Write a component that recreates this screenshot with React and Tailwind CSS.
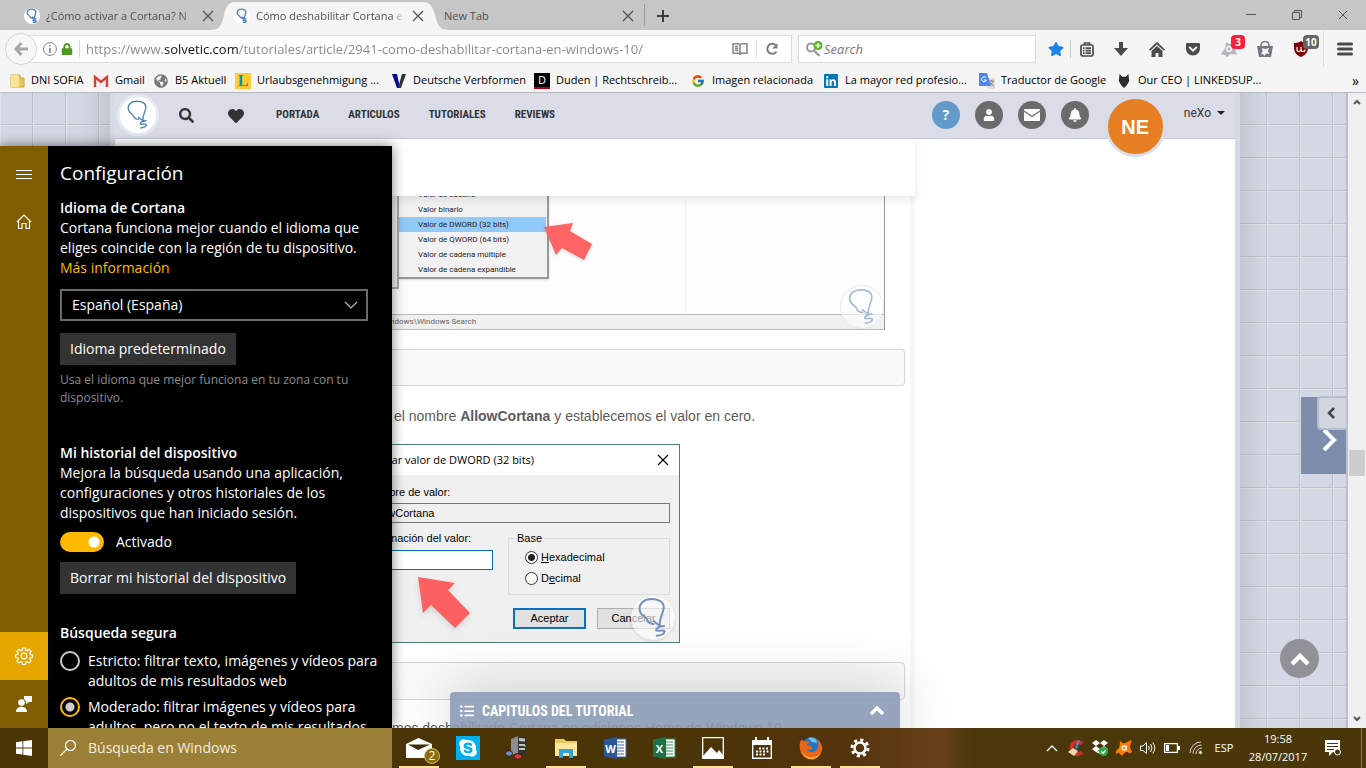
import { FaSearch, FaHeart, FaUser, FaBell, FaListUl, FaStar, FaLock, FaSkype, FaGlobeAmericas, FaLinkedin, FaGetPocket } from "react-icons/fa";
import { FcGoogle } from "react-icons/fc";

const UI = "font-['Open_Sans','Noto_Sans',sans-serif]";
const NARROW = "font-['Roboto_Condensed','Liberation_Sans_Narrow',Roboto,sans-serif]";

function Bulb({ className, stroke = "#4f81b5", width = 1.6 }) {
  return (
    <svg viewBox="0 0 36 36" className={className} fill="none" stroke={stroke} strokeWidth={width} strokeLinecap="round" strokeLinejoin="round" aria-hidden="true">
      <path d="M18.500 23C15 22.500 13.500 21.500 13 19C12 16.500 7.500 16.500 7 11C6.500 6 11 2.500 16.500 2.500C22.500 2.500 27 4.500 26.800 9.500C26.600 14 23 17.500 23.500 24.500L18.500 20.500M27 24.500C24.500 24.500 20.500 26 20.500 28C22.500 29.500 26.500 27 27.500 29C27.500 31 24 32.500 21 32.500" />
    </svg>
  );
}

function Cross({ className }) {
  return (
    <svg viewBox="0 0 12 12" className={className} stroke="currentColor" strokeWidth="1.2" aria-hidden="true">
      <path d="M1 1l10 10M11 1L1 11" />
    </svg>
  );
}

function TabIcon() {
  return (
    <span className="flex size-4 shrink-0 items-center justify-center rounded-full bg-white">
      <Bulb className="size-4" width={3} />
    </span>
  );
}

function TabBar() {
  const title = "relative w-[150px] overflow-hidden whitespace-nowrap [mask-image:linear-gradient(90deg,#000_90%,transparent)]";
  return (
    <div className="flex h-[30px] shrink-0 items-stretch bg-[#c6c6c6] text-[11px] text-[#4f4f4f]">
      <div className="flex w-[223px] items-center gap-1.5 pl-6 pt-0.5">
        <TabIcon />
        <span className={title}>¿Cómo activar a Cortana? N</span>
        <button aria-label="Cerrar pestaña"><Cross className="size-3" /></button>
      </div>
      <div className="relative flex w-[214px] items-center gap-1.5 pl-[11px] pt-0.5">
        <svg viewBox="0 0 238 28" preserveAspectRatio="none" className="absolute -left-3 top-0.5 h-7 w-[238px]" fill="#f5f5f5" aria-hidden="true">
          <path d="M0 28C7 28 10 25 12 17C14 7 16 0 24 0H212C220 0 223 7 225 17C227 25 231 28 238 28Z" />
        </svg>
        <span className="relative"><TabIcon /></span>
        <span className={title}>Cómo deshabilitar Cortana e</span>
        <button aria-label="Cerrar pestaña" className="relative"><Cross className="size-3" /></button>
      </div>
      <div className="flex w-[207px] items-center justify-between pl-[7px] pr-2.5 pt-0.5">
        <span>New Tab</span>
        <button aria-label="Cerrar pestaña"><Cross className="size-3" /></button>
      </div>
      <button aria-label="Nueva pestaña" className="my-1 border-l border-[#9c9c9c] px-3 pt-0.5">
        <svg viewBox="0 0 12 12" className="size-3" stroke="#3c3c3c" strokeWidth="2"><path d="M6 0v12M0 6h12" /></svg>
      </button>
      <div className="ml-auto flex items-center text-[#555]">
        <button aria-label="Minimizar" className="flex w-[46px] justify-center">
          <svg viewBox="0 0 10 10" className="size-2.5" stroke="currentColor"><path d="M0 4.500h10" /></svg>
        </button>
        <button aria-label="Restaurar" className="flex w-[46px] justify-center">
          <svg viewBox="0 0 10 10" className="size-2.5" fill="none" stroke="currentColor"><path d="M.5 2.500h7v7h-7zM2.500 2.500v-2h7v7h-2" /></svg>
        </button>
        <button aria-label="Cerrar" className="flex w-[46px] justify-center"><Cross className="size-2.5" /></button>
      </div>
    </div>
  );
}

function NavBar() {
  const slot = "relative flex h-7 w-9 items-center justify-center";
  return (
    <div className="flex h-[38px] shrink-0 items-center bg-[#f5f5f5] pl-[5px] text-[#4a4a4a]">
      <button aria-label="Atrás" className="z-10 flex size-8 shrink-0 items-center justify-center rounded-full border border-[#d4d4d4] bg-[#f7f7f7]">
        <svg viewBox="0 0 16 16" className="size-4" fill="none" stroke="#a8a8a8" strokeWidth="3"><path d="M15 8H3M8.500 2L3 8l5.500 6" /></svg>
      </button>
      <div className="-ml-4 flex h-7 min-w-0 flex-1 items-center border border-[#dcdcdc] bg-white pl-[21px]">
        <svg viewBox="0 0 14 14" className="size-3.5 shrink-0" fill="none" stroke="#808080"><circle cx="7" cy="7" r="6.400" /><path d="M7 6v5M7 3v1.600" strokeWidth="1.600" /></svg>
        <FaLock className="ml-1 size-3 shrink-0 text-[#4a9a1e]" />
        <span className="ml-1.5 h-[18px] w-px shrink-0 bg-[#d8d8d8]" />
        <input
          aria-label="Dirección"
          defaultValue="https://www.solvetic.com/tutoriales/article/2941-como-deshabilitar-cortana-en-windows-10/"
          className="ml-1.5 mt-0.5 min-w-0 flex-1 bg-[linear-gradient(90deg,#858585_77px,#111_77px,#111_152px,#858585_152px)] bg-clip-text text-[13px] text-transparent outline-none"
        />
        <button aria-label="Vista de lectura">
          <svg viewBox="0 0 16 14" className="h-3.5 w-4" fill="none" stroke="#858585" strokeWidth="1.500"><path d="M8 3V12M1 1.700h5Q8 2 8 3Q8 2 10 1.700h5v9.500h-5Q8 11.500 8 13Q8 11.500 6 11.200H1zM3 4.500h3M3 6.500h3M3 8.500h3" /></svg>
        </button>
        <span className="mx-2 h-[18px] w-px bg-[#dcdcdc]" />
        <button aria-label="Recargar" className="mr-3">
          <svg viewBox="0 0 14 14" className="size-3.5" fill="none" stroke="#7d7d7d" strokeWidth="2"><path d="M11.500 9.500A5 5 0 1 1 10.500 3" /><path d="M12.500 1v5.500H7z" fill="#7d7d7d" stroke="none" /></svg>
        </button>
      </div>
      <label className="ml-1.5 flex h-7 w-[238px] items-center border border-[#dcdcdc] bg-white pl-1.5">
        <svg viewBox="0 0 18 16" className="h-4 w-[18px]" fill="none"><path d="M9.500 10l5 5" stroke="#999" strokeWidth="2.400" /><circle cx="6" cy="6.500" r="4" stroke="#999" strokeWidth="2" /><circle cx="13" cy="4.500" r="4.500" fill="#5cb622" /><path d="M13 2v5M10.500 4.500h5" stroke="#fff" strokeWidth="1.400" /></svg>
        <input aria-label="Buscar" placeholder="Search" className="ml-px mt-0.5 min-w-0 flex-1 bg-transparent text-[13px] italic outline-none placeholder:text-[#777]" />
      </label>
      <div className="flex items-center pl-1.5">
        <button aria-label="Marcador" className="flex h-7 w-7 items-center justify-center"><FaStar className="size-4 text-[#1a82e8]" /></button>
        <span className="h-[18px] w-px bg-[#c8c8c8]" />
        <button aria-label="Marcadores" className="flex h-7 w-8 items-center justify-center">
          <svg viewBox="0 0 14 15" className="h-[15px] w-3.5" fill="none" stroke="currentColor" strokeWidth="1.700"><rect x="1" y="3" width="12" height="11" rx="1.500" /><path d="M4.500 3V1h5v2M3 6.200h1.500M5.500 6.200H11M3 8.700h1.500M5.500 8.700H11M3 11.200h1.500M5.500 11.200H11" /></svg>
        </button>
        <button aria-label="Descargas" className={slot}>
          <svg viewBox="0 0 14 14" className="size-3.5" fill="currentColor"><path d="M5 0h4v6h5l-7 8-7-8h5z" /></svg>
        </button>
        <button aria-label="Inicio" className={slot}>
          <svg viewBox="0 0 16 15" className="h-[15px] w-4" fill="currentColor"><path d="M8 0l8 7.500-1.200 1.200L8 2.500 1.200 8.700 0 7.500zM8 4l5.500 5v6H9.500v-4h-3v4h-4V9z" /></svg>
        </button>
        <button aria-label="Pocket" className={slot}><FaGetPocket className="size-4" /></button>
        <button aria-label="Avast" className={slot}>
          <svg viewBox="0 0 16 16" className="size-4"><path d="M5 1q3 2 5 2l5-2q0 3-1 6 0 3 2 6-3 1-5 0-3 0-4 3-2 0-3-2-2-1-4 0 0-3 3-5 2-3 2-8z" fill="#b7b7c1" /><circle cx="8" cy="8" r="2.300" stroke="#fff" strokeWidth="1.300" fill="none" /></svg>
          <span className="absolute left-5 top-0 flex h-3.5 w-3.5 items-center justify-center rounded-sm bg-[#fb1f3c] text-[10px] font-bold leading-none text-white">3</span>
        </button>
        <button aria-label="Compras" className={slot}>
          <svg viewBox="0 0 16 16" className="size-4" fill="none"><path d="M0 5h16l-2 11H2z" fill="#777783" /><path d="M4 7V4a4 3.500 0 0 1 8 0v3" stroke="#777783" strokeWidth="1.600" /><path d="M5 7l3 1 4-1-1 3 1 3-3-.5L7.500 15 6 13l-2 .5 1.500-3z" fill="#f5f5f5" /></svg>
        </button>
        <button aria-label="uBlock" className={slot}>
          <svg viewBox="0 0 14 16" className="h-4 w-3.5"><path d="M7 0c2 1.500 4 2 7 2v4c0 5-2 8-7 10C2 14 0 11 0 6V2c3 0 5-.5 7-2z" fill="#800000" /><path d="M3 6v2.500a1.500 1.500 0 0 0 4 0V6v2.500a1.500 1.500 0 0 0 4 0" stroke="#fff" strokeWidth="1.200" fill="none" /></svg>
          <span className="absolute left-5 top-0 flex h-3.5 w-4 items-center justify-center rounded-sm bg-[#666] text-[10px] font-bold leading-none text-white">10</span>
        </button>
        <button aria-label="Menú" className="ml-1 flex h-9 w-[43px] items-center justify-center border-l border-[#ddd]">
          <svg viewBox="0 0 16 14" className="h-3.5 w-4" stroke="currentColor" strokeWidth="3" strokeLinecap="round"><path d="M1.500 2h13M1.500 7h13M1.500 12h13" /></svg>
        </button>
      </div>
    </div>
  );
}

const bookmarks = [
  { t: "DNI SOFIA", w: "w-[84px]", i: <svg viewBox="0 0 16 16" className="size-4"><path d="M2 2h9v3h4v9H2z" fill="#e8c95c" stroke="#c9a83c" /><path d="M2 2h8v12H2z" fill="#f7e594" /></svg> },
  { t: "Gmail", w: "w-[60px]", i: <svg viewBox="0 0 16 16" className="size-4"><path d="M1 3h14v11H1z" fill="#eee" /><path d="M2 14V4l6 5 6-5v10" fill="none" stroke="#d54137" strokeWidth="2.400" /></svg> },
  { t: "B5 Aktuell", w: "w-[82px]", i: <FaGlobeAmericas className="size-3.5 text-[#777]" /> },
  { t: "Urlaubsgenehmigung ...", w: "w-[156px]", i: <span className="flex size-4 items-center justify-center bg-[#ffcb32] font-['Liberation_Serif',serif] text-base font-bold leading-none text-[#1590a5]">L</span> },
  { t: "Deutsche Verbformen", w: "w-[143px]", i: <svg viewBox="0 0 16 16" className="size-4"><path d="M1 1h5l3 14H6z" fill="#000d90" /><path d="M11 1h4L10 15H7z" fill="#333" /></svg> },
  { t: "Duden | Rechtschreib...", w: "w-[156px]", i: <span className="flex size-4 items-center justify-center border-b-2 border-[#b00018] bg-black text-[11px] leading-none text-white">D</span> },
  { t: "Imagen relacionada", w: "w-[133px]", i: <FcGoogle className="size-3.5" /> },
  { t: "La mayor red profesio...", w: "w-[156px]", i: <FaLinkedin className="size-4 text-[#0677b5]" /> },
  { t: "Traductor de Google", w: "w-[137px]", i: <svg viewBox="0 0 16 16" className="size-4"><path d="M6 5h10v11H9z" fill="#dcdcdc" /><path d="M0 0h8l4 13H0z" fill="#4b86ec" /><path d="M7 4.500A2.500 2.500 0 1 0 7.500 7H5" fill="none" stroke="#fff" /><path d="M10 8h5M12.500 7v1M14 8q-1 4-4 5M11 9q1 3 4 4" fill="none" stroke="#888" /></svg> },
  { t: "Our CEO | LINKEDSUP...", w: "w-[150px]", i: <svg viewBox="0 0 16 16" className="size-3.5"><path d="M3 0l3 3h4l3-3 1 8-3 5-3 3-3-3-3-5z" fill="#2c2c2c" /></svg> },
];

function Bookmarks() {
  return (
    <nav className="flex h-[25px] shrink-0 items-center border-b border-[#b9bac0] bg-[#f5f5f5] pl-[9px] pt-px text-[11px] text-black">
      {bookmarks.map((b) => (
        <a key={b.t} href="#" className={`flex items-center gap-1.5 whitespace-nowrap ${b.w}`}>
          <span className="flex size-4 shrink-0 items-center justify-center">{b.i}</span>
          <span>{b.t}</span>
        </a>
      ))}
      <button aria-label="Más marcadores" className="ml-auto pr-[7px] text-sm leading-none">»</button>
    </nav>
  );
}

function SiteHeader() {
  const round = "flex size-7 items-center justify-center rounded-full bg-[#6b6b6b] text-white";
  return (
    <header className="relative z-20 flex h-[46px] shrink-0 items-start border-b border-[#c6c8d0] bg-[#dadde8] text-[#333]">
      <a href="#" aria-label="Solvetic" className="ml-0.5 mt-px flex size-[42px] items-center justify-center rounded-full bg-[#e6eaf3]">
        <span className="flex size-9 items-center justify-center rounded-full bg-white"><Bulb className="size-8" width={1.5} /></span>
      </a>
      <div className="flex h-[45px] items-center pl-5">
        <button aria-label="Buscar"><FaSearch className="size-[15px]" /></button>
        <button aria-label="Favoritos" className="ml-[34px]"><FaHeart className="size-4" /></button>
        <nav className={`ml-8 flex gap-[29px] text-[11px] font-bold ${NARROW}`}>
          <a href="#">PORTADA</a><a href="#">ARTICULOS</a><a href="#">TUTORIALES</a><a href="#">REVIEWS</a>
        </nav>
      </div>
      <div className="ml-auto flex items-start">
        <div className="mt-2 flex gap-[15px]">
          <button aria-label="Ayuda" className="flex size-7 items-center justify-center rounded-full bg-[#649acb] text-sm font-bold text-white">?</button>
          <button aria-label="Perfil" className={round}><FaUser className="size-3" /></button>
          <button aria-label="Mensajes" className={round}>
            <svg viewBox="0 0 16 12" className="h-3 w-4"><rect width="16" height="12" rx="1" fill="#fff" /><path d="M0 2l8 5.500L16 2" fill="none" stroke="#6b6b6b" strokeWidth="1.300" /></svg>
          </button>
          <button aria-label="Avisos" className={round}><FaBell className="size-3.5" /></button>
        </div>
        <span className="ml-4 mt-[3px] flex size-[61px] items-center justify-center rounded-full border-[3px] border-[#dadde8] bg-[#e67e22] font-['Liberation_Sans',sans-serif] text-xl font-bold text-white">NE</span>
        <button className="ml-[18px] mr-2.5 mt-3 flex items-center gap-1.5 font-['Roboto',sans-serif] text-xs">
          neXo
          <svg viewBox="0 0 8 4" className="h-1 w-2"><path d="M0 0h8L4 4z" fill="#222" /></svg>
        </button>
      </div>
    </header>
  );
}

function MenuShot() {
  const rows = ["Valor de cadena", "Valor binario", "Valor de DWORD (32 bits)", "Valor de QWORD (64 bits)", "Valor de cadena múltiple", "Valor de cadena expandible"];
  return (
    <figure className="relative ml-[30px] mr-[25px] flex h-[143px] flex-col border-r border-[#999] bg-[#fdfdfd] text-[8px] text-[#222] font-['Roboto',sans-serif]">
      <div className="flex flex-1">
        <div className="mb-[25px] w-[254px] border-b-2 border-r-2 border-[#aaa] bg-[#f2f2f2]" />
        <ul className="mb-[35px] w-[150px] border-b-2 border-r-2 border-[#999] bg-[#f2f2f2] pr-px shadow">
          {rows.map((r, i) => (
            <li key={r} className={`flex h-[15px] items-center whitespace-nowrap pl-[19px] ${i === 2 ? "bg-[#91c9f7]" : ""}`}>{r}</li>
          ))}
        </ul>
        <div className="ml-[136px] w-px bg-[#f4f4f4]" />
      </div>
      <figcaption className="h-4 border-y border-[#bbb] bg-[#f0f0f0] pl-[245px] leading-[14px] text-[#666]">ndows\Windows Search</figcaption>
      <svg viewBox="0 0 52 42" className="absolute left-[398px] top-[35px] h-[42px] w-[52px] drop-shadow" aria-hidden="true">
        <path d="M1 5L30 1 27 9 49 22 41 38 19 26 13 33z" fill="#ff6464" />
      </svg>
      <span className="absolute bottom-px right-0 flex size-11 items-center justify-center rounded-full border border-[#e4e9f0] bg-white/60">
        <Bulb className="size-10" stroke="#a9bdd6" />
      </span>
    </figure>
  );
}

function DwordDialog() {
  return (
    <div className="relative mx-auto w-[330px] border border-[#4f7f72] bg-[#f0f0f0] text-[11px] text-black font-['Liberation_Sans',sans-serif]">
      <div className={`flex h-[30px] items-center justify-between bg-white pl-[9px] pr-2.5 ${UI}`}>
        <span className="text-[11px] pl-3">Editar valor de DWORD (32 bits)</span>
        <button aria-label="Cerrar diálogo"><Cross className="size-3" /></button>
      </div>
      <div className="px-[9px] pb-[13px] pt-2.5">
        <label htmlFor="vname" className="block pl-1.5 leading-[14px]">Nombre de valor:</label>
        <input id="vname" readOnly defaultValue="AllowCortana" className="mt-1 h-5 w-full border border-[#777] bg-[#f0f0f0] px-2" />
        <div className="mt-2 flex justify-between">
          <div>
            <label htmlFor="vdata" className="block pl-1.5 leading-[14px]">Información del valor:</label>
            <input id="vdata" defaultValue="" className="mt-[5px] h-5 w-[133px] border border-[#0b6fb8] bg-white" />
          </div>
          <fieldset className="flex h-16 w-[162px] flex-col gap-1 border border-[#dcdcdc] pl-4 pt-1">
            <legend className="-ml-2.5 px-0.5 leading-[14px]">Base</legend>
            <label className="flex h-[17px] items-center gap-[3px]"><input type="radio" name="base" defaultChecked className="m-0 size-[13px] appearance-none rounded-full border border-[#333] bg-white bg-[radial-gradient(#222_3px,transparent_4px)]" /><span><u>H</u>exadecimal</span></label>
            <label className="flex h-[17px] items-center gap-[3px]"><input type="radio" name="base" className="m-0 size-[13px] appearance-none rounded-full border border-[#333] bg-white" /><span>D<u>e</u>cimal</span></label>
          </fieldset>
        </div>
        <div className="mt-[13px] flex justify-end gap-[11px]">
          <button className="h-[21px] w-[73px] border-2 border-[#0f70c0] bg-[#e1e1e1]">Aceptar</button>
          <button className="h-[21px] w-[73px] border border-[#adadad] bg-[#e1e1e1]">Cancelar</button>
        </div>
      </div>
      <span className="absolute bottom-0.5 right-1 flex size-11 items-center justify-center rounded-full bg-white/60 shadow">
        <Bulb className="size-11" stroke="#7590bf" />
      </span>
      <svg viewBox="0 0 54 54" className="absolute left-[66px] top-[131px] size-[54px] drop-shadow-md" aria-hidden="true">
        <path d="M1 1L38 7 31 14 53 37 38 52 14 29 6 37z" fill="#fc6060" />
      </svg>
    </div>
  );
}

function Page() {
  return (
    <div className="flex min-h-0 flex-1">
      <div className="relative min-w-0 flex-1 overflow-hidden border-r-2 border-[#b9c0d0] bg-[#d3d8e4]">
        <div className="flex h-full">
          <div className="w-[110px] shrink-0 bg-[linear-gradient(90deg,transparent_80px,#00000014),linear-gradient(90deg,#bcc1cc_1px,#dee2eb_1px,#dee2eb_2px,transparent_2px),linear-gradient(#bcc1cc_1px,#dee2eb_1px,#dee2eb_2px,transparent_2px)] bg-[size:100%_100%,33px_33px,33px_33px] bg-[position:0_0,32px_0,0_31px]" />
          <main className="flex min-w-0 flex-1 flex-col border-x-[5px] border-[#d5dae5] bg-white">
            <SiteHeader />
            <div className="flex min-h-0 flex-1">
              <article className="flex min-w-0 flex-1 flex-col border-r-[5px] border-[#f7f7f7] font-['Liberation_Sans',sans-serif] text-sm text-[#5c5c5c]">
                <div className="z-10 -mr-[5px] h-[57px] shrink-0 bg-white shadow-[0_3px_10px_#0000001a]" />
                <div className="-mt-[9px]"><MenuShot /></div>
                <div className="ml-2.5 mr-[5px] mt-[19px] h-[37px] shrink-0 rounded border border-[#d6d6d6] bg-[#fafafa]" />
                <p className="mt-5 whitespace-nowrap pl-[279px] leading-5">el nombre <b>AllowCortana</b> y establecemos el valor en cero.</p>
                <div className="mt-[18px] -mr-[5px]"><DwordDialog /></div>
                <div className="ml-2.5 mr-[5px] mt-[19px] h-[38px] shrink-0 rounded border border-[#d6d6d6] bg-[#fafafa]" />
                <p className="mt-[18px] whitespace-nowrap pl-[277px] leading-5">mos deshabilitado Cortana en ediciones Home de Windows 10.</p>
              </article>
              <aside className="w-[320px] shrink-0" />
            </div>
          </main>
          <div className="w-[106px] shrink-0 bg-[linear-gradient(90deg,#00000014,transparent_26px),linear-gradient(90deg,#bcc1cc_1px,#dee2eb_1px,#dee2eb_2px,transparent_2px),linear-gradient(#bcc1cc_1px,#dee2eb_1px,#dee2eb_2px,transparent_2px)] bg-[size:100%_100%,33px_33px,33px_33px] bg-[position:0_0,26px_0,0_31px]" />
        </div>
        <button aria-label="Siguiente" className="absolute -right-px top-[304px] flex h-[77px] w-[46px] items-center justify-center bg-[#7f8dac] pl-3 pt-2">
          <svg viewBox="0 0 16 24" className="h-6 w-4" fill="none" stroke="#fff" strokeWidth="4"><path d="M2 2l10 10L2 22" /></svg>
        </button>
        <button aria-label="Mostrar panel lateral" className="absolute -right-0.5 top-[303px] flex h-[34px] w-[31px] items-center justify-center rounded-l border-2 border-r-0 border-[#b6bdcb] bg-[#d0d5e0] pr-1.5">
          <svg viewBox="0 0 8 12" className="h-3 w-2" fill="none" stroke="#444" strokeWidth="2.500"><path d="M7 1L2 6l5 5" /></svg>
        </button>
        <button aria-label="Volver arriba" className="absolute bottom-[50px] right-[27px] flex size-[39px] items-center justify-center rounded-full bg-[#909297]">
          <svg viewBox="0 0 20 14" className="h-3.5 w-5" fill="none" stroke="#fff" strokeWidth="4.500"><path d="M2 12l8-8 8 8" /></svg>
        </button>
        <button className={`absolute bottom-0 left-[450px] flex h-9 w-[450px] items-center gap-2 rounded-t bg-[#8c9ab6]/90 px-2.5 pt-0.5 text-sm font-bold text-white shadow-[0_0_60px_#00000040] ${NARROW}`}>
          <FaListUl className="size-3.5" />
          <span>CAPITULOS DEL TUTORIAL</span>
          <svg viewBox="0 0 14 10" className="ml-auto mr-1.5 h-2.5 w-3.5" fill="none" stroke="#fff" strokeWidth="3.400"><path d="M1 8l6-6 6 6" /></svg>
        </button>
      </div>
      <div className="flex w-[18px] shrink-0 flex-col items-center bg-[#f0f0f0] py-1.5 text-[#555]" aria-hidden="true">
        <svg viewBox="0 0 8 6" className="h-1.5 w-2" fill="none" stroke="currentColor" strokeWidth="2"><path d="M1 5l3-3 3 3" /></svg>
        <span className="mt-[345px] h-[26px] w-4 shrink-0 bg-[#cdcdcd]" />
        <svg viewBox="0 0 8 6" className="mt-auto h-1.5 w-2" fill="none" stroke="currentColor" strokeWidth="2"><path d="M1 1l3 3 3-3" /></svg>
      </div>
    </div>
  );
}

function CortanaPanel() {
  const btn = "flex h-8 items-center bg-[#333] px-2.5";
  const radio = "m-0 size-5 shrink-0 appearance-none rounded-full border-2";
  return (
    <section className="absolute bottom-10 left-0 top-[146px] z-30 flex w-[392px] bg-black text-sm leading-5 text-white shadow-[0_0_12px_#0008]">
      <div className="flex w-12 shrink-0 flex-col bg-[#805e00]">
        <button aria-label="Menú" className="flex h-14 w-12 items-center justify-center"><svg viewBox="0 0 16 9" className="h-[9px] w-4" stroke="#fff"><path d="M0 .5h16M0 4.500h16M0 8.500h16" /></svg></button>
        <button aria-label="Inicio" className="flex h-10 w-12 items-center justify-center"><svg viewBox="0 0 16 16" className="size-4" fill="none" stroke="#fff" strokeWidth="1.200"><path d="M1 8l7-7 7 7M2.500 7v7.500H6V9.500h4v5h3.500V7" /></svg></button>
        <button aria-label="Configuración" className="mt-auto flex h-12 w-12 items-center justify-center bg-[#e6a600]">
          <svg viewBox="0 0 18 18" className="size-[18px]" fill="none" stroke="#fff" strokeWidth="1.200"><path d="M7.500 1h3l.4 2.200 1.200.5 1.900-1.300 2 2-1.300 1.900.5 1.200 2.200.4v2.600l-2.200.4-.5 1.200 1.300 1.900-2 2-1.900-1.300-1.200.5-.4 2.200h-3l-.4-2.200-1.200-.5L4 16l-2-2 1.300-1.900-.5-1.200-2.200-.4V7.900l2.200-.4.5-1.200L2 4.400l2-2 1.900 1.300 1.200-.5z" /><circle cx="9" cy="9" r="2.800" /></svg>
        </button>
        <button aria-label="Comentarios" className="flex h-12 w-12 items-center justify-center"><svg viewBox="0 0 16 16" className="size-4" fill="#fff"><circle cx="5.500" cy="6.500" r="3.300" /><path d="M0 16c0-7 11-7 11 0zM8 0h8v6h-3l-3 2V5L8 3z" /></svg></button>
      </div>
      <div className="flex min-w-0 flex-1 flex-col items-start overflow-hidden whitespace-nowrap pl-3 pt-[15px] [&>*]:shrink-0">
        <h1 className="h-[37px] text-[19px] leading-6">Configuración</h1>
        <h2 className="font-semibold">Idioma de Cortana</h2>
        <p>Cortana funciona mejor cuando el idioma que<br />eliges coincide con la región de tu dispositivo.</p>
        <a href="#" className="text-[#ffb900]">Más información</a>
        <div className="relative mt-[11px]">
          <select aria-label="Idioma" className="block h-8 w-[308px] appearance-none border-2 border-[#6b6b6b] bg-black pl-2.5 text-white"><option>Español (España)</option></select>
          <svg viewBox="0 0 14 8" className="pointer-events-none absolute right-2.5 top-3 h-2 w-3.5" fill="none" stroke="#bbb" strokeWidth="1.200"><path d="M1 1l6 6 6-6" /></svg>
        </div>
        <button className={`mt-3 ${btn}`}>Idioma predeterminado</button>
        <p className="mt-1.5 text-xs leading-[18px] text-[#8c8c8c]">Usa el idioma que mejor funciona en tu zona con tu<br />dispositivo.</p>
        <h2 className="mt-9 font-semibold">Mi historial del dispositivo</h2>
        <p>Mejora la búsqueda usando una aplicación,<br />configuraciones y otros historiales de los<br />dispositivos que han iniciado sesión.</p>
        <label className="mt-[9px] flex items-center gap-3">
          <input type="checkbox" role="switch" defaultChecked className="m-0 h-5 w-11 appearance-none rounded-full bg-[#ffb900] bg-[radial-gradient(circle_at_34px_10px,#fff_5px,transparent_6px)]" />
          Activado
        </label>
        <button className={`mt-2.5 ${btn}`}>Borrar mi historial del dispositivo</button>
        <h2 className="mt-[29px] font-semibold">Búsqueda segura</h2>
        <label className="mt-2 flex items-start gap-2"><input type="radio" name="safe" className={`${radio} border-[#ccc]`} /><span>Estricto: filtrar texto, imágenes y vídeos para<br />adultos de mis resultados web</span></label>
        <label className="mt-1.5 flex items-start gap-2"><input type="radio" name="safe" defaultChecked className={`${radio} border-[#ffb900] bg-[radial-gradient(#ccc_4px,transparent_5px)]`} /><span>Moderado: filtrar imágenes y vídeos para<br />adultos, pero no el texto de mis resultados</span></label>
      </div>
    </section>
  );
}

function OfficeIcon({ color, dark, letter }) {
  return (
    <span className="relative flex h-6 w-6 items-center">
      <svg viewBox="0 0 24 24" className="absolute size-6"><path d="M12 3h11v18H12z" fill="#fff" stroke={color} /><path d="M14 6h7M14 9h7M14 12h7M14 15h7M14 18h7" stroke={color} /><path d="M1 3.500L14 1v22L1 20.500z" fill={dark} /></svg>
      <span className="relative w-[15px] text-center text-[11px] font-bold leading-none text-white">{letter}</span>
    </span>
  );
}

const apps = [
  { n: "Correo", on: true, i: <span className="relative block"><svg viewBox="0 0 26 20" className="h-5 w-[26px]"><path d="M0 6L12.500 0 26 6v14H0z" fill="#fff" /><path d="M2 6.500h22L12 12z" fill="#3a2a08" /></svg><span className="absolute -bottom-1.5 -right-2 flex size-4 items-center justify-center rounded-full border border-[#d3bb78] bg-[#8c6a10] text-xs leading-none text-white">2</span></span> },
  { n: "Skype", i: <span className="flex size-6 items-center justify-center bg-[#00aff0]"><FaSkype className="size-5 text-white" /></span> },
  { n: "Servidor", i: <svg viewBox="0 0 24 24" className="size-6"><path d="M6 3l7-3v17l-7 2z" fill="#8d8d8d" /><path d="M13 0l8 1v17l-8 1z" fill="#333" /><path d="M14 2l6 .6v3L14 5zM14 8h6v2h-6zM14 12h6v2h-6z" fill="#c4c4c4" /><ellipse cx="4" cy="17.500" rx="3.500" ry="2.800" fill="#6f8fc4" stroke="#222" /><ellipse cx="13" cy="20.500" rx="4" ry="2.800" fill="#e33434" stroke="#222" /><circle cx="20" cy="10" r="1" fill="#4fd04f" /></svg> },
  { n: "Explorador", on: true, i: <svg viewBox="0 0 24 20" className="h-5 w-6"><path d="M1 1h9l2 2h11v15H1z" fill="#f0c75e" /><path d="M1 5h22v13H1z" fill="#ffe69a" /><path d="M5 20v-9h14v9h-4v-5H9v5z" fill="#31a2dd" /></svg> },
  { n: "Word", i: <OfficeIcon color="#3f6bb0" dark="#2a579a" letter="W" /> },
  { n: "Excel", i: <OfficeIcon color="#2e8b57" dark="#1e7145" letter="X" /> },
  { n: "Fotos", on: true, i: <svg viewBox="0 0 22 22" className="size-[22px]"><path d="M.7.700h20.600v20.600H.7z" fill="none" stroke="#fff" strokeWidth="1.300" /><path d="M1 19l8-9 6 6 2-3 4 5v3H1z" fill="#fff" /></svg> },
  { n: "Calendario", i: <svg viewBox="0 0 20 22" className="h-[22px] w-5"><path d="M.7 4h18.600v17.300H.7z" fill="none" stroke="#fff" strokeWidth="1.400" /><path d="M0 3h3V0h2v3h10V0h2v3h3v5H0z" fill="#fff" /><path d="M7 11.500h10M4 14.500h13M4 17.500h10" stroke="#fff" strokeWidth="2" strokeDasharray="2 1.500" /></svg> },
  { n: "Firefox", on: true, i: <svg viewBox="0 0 24 24" className="size-6"><circle cx="12.500" cy="11" r="10" fill="#2476c7" /><path d="M9 2c6-2 9 2 9 5l-5-1z" fill="#6ec2ef" /><path d="M2 4c2 0 3 1 5 2 2-1 4 0 4 1-3 0-3 2-3 3 2-1 5 0 5 2-2 3-4 2-5 2 4 4 10 2 11-3 1-3 0-6-1-8 6 4 7 12 2 17-7 6-18 3-19-7C0 9 1 6 2 4z" fill="#e8651a" /><path d="M3 14c2 8 13 10 18 3-3 10-17 8-18-3z" fill="#f9ad25" /></svg> },
  { n: "Ajustes", on: true, i: <svg viewBox="0 0 20 20" className="size-5" fill="none" stroke="#fff"><circle cx="10" cy="10" r="5.500" strokeWidth="2.500" /><circle cx="10" cy="10" r="8" strokeWidth="3" strokeDasharray="3.100 3.180" /></svg> },
];

function Taskbar() {
  const tray = "flex w-6 items-center justify-center";
  return (
    <footer className="relative z-40 flex h-10 shrink-0 items-stretch bg-[linear-gradient(90deg,#4a3605_0%,#4b3407_50%,#54340d_62%,#68401a_69%,#4b380a_71%,#49370a_100%)] text-white">
      <button aria-label="Inicio" className="flex w-12 items-center justify-center">
        <svg viewBox="0 0 16 16" className="size-4" fill="#fff"><path d="M0 2.200L6.500 1.300v6.200H0zM7.300 1.200L16 0v7.500H7.300zM0 8.400h6.500v6.200L0 13.700zM7.300 8.400H16V16l-8.700-1.200z" /></svg>
      </button>
      <label className="flex w-[344px] items-center bg-[#9a7f36] pl-3">
        <svg viewBox="0 0 16 16" className="size-4" fill="none" stroke="#fff" strokeWidth="1.200"><circle cx="10.500" cy="5.500" r="5" /><path d="M7 9l-7 7" /></svg>
        <input aria-label="Búsqueda" placeholder="Búsqueda en Windows" className="ml-3 min-w-0 flex-1 bg-transparent text-sm outline-none placeholder:text-[#f3eee0]" />
      </label>
      <div className="flex gap-[9px] pl-[7px]">
        {apps.map((a) => (
          <button key={a.n} aria-label={a.n} className={`flex w-10 items-center justify-center border-b-2 pt-0.5 ${a.on ? "border-[#ffe09a]" : "border-transparent"}`}>{a.i}</button>
        ))}
      </div>
      <div className="ml-auto flex items-stretch text-xs">
        <button aria-label="Iconos ocultos" className={tray}><svg viewBox="0 0 12 7" className="h-[7px] w-3" fill="none" stroke="#fff" strokeWidth="1.300"><path d="M1 6l5-5 5 5" /></svg></button>
        <button aria-label="CCleaner" className={tray}><svg viewBox="0 0 16 16" className="size-4"><path d="M14 4A6 6 0 1 0 14 12" fill="none" stroke="#d22e26" strokeWidth="4" /><path d="M10 0l2 1-3 8-2-1z" fill="#3d8ede" /><path d="M5 8l5 3-4 5-6-4z" fill="#f3d6a8" /></svg></button>
        <button aria-label="Dropbox" className={tray}><svg viewBox="0 0 16 16" className="size-4"><path d="M4 0l4 3-4 3-4-3zM12 0l4 3-4 3-4-3zM4 6l4 3-4 3-4-3zM12 6l4 3-4 3-4-3zM8 10l3 2-3 2-4-2z" fill="#fff" /><circle cx="11.500" cy="11.500" r="4.500" fill="#27ad3b" /><path d="M9.500 11.500l1.500 1.700 2.700-3" stroke="#fff" fill="none" strokeWidth="1.400" /></svg></button>
        <button aria-label="Avast" className={tray}><svg viewBox="0 0 16 16" className="size-4"><path d="M4 1q3 3 5 2l6-3q1 2-1 6 0 3 2 6-2 2-5 0-3 0-4 3-2 1-3-1Q3 12 0 14-1 11 3 8 4 5 4 1z" fill="#ff7800" /><circle cx="8" cy="8" r="2" stroke="#fff" fill="none" strokeWidth="1.300" /><path d="M10.300 5.500v5" stroke="#fff" /></svg></button>
        <button aria-label="Volumen" className={tray}><svg viewBox="0 0 16 14" className="h-3.5 w-4" fill="none" stroke="#fff"><path d="M.5 5h2.500l3.500-3.500v11L3 9.500H.5zM8.500 5q1.500 2 0 4M10.500 3q3 4 0 8M12.800 1.500q4 5.500 0 11" /></svg></button>
        <button aria-label="Batería" className={tray}><svg viewBox="0 0 16 10" className="h-2.5 w-4"><path d="M.6.600h12.800v8.800H.6z" fill="none" stroke="#fff" strokeWidth="1.200" /><path d="M2 2h3v6H2zM14 3h2v4h-2z" fill="#fff" /></svg></button>
        <button aria-label="Red" className={tray}><svg viewBox="0 0 14 14" className="size-3.5" fill="none" stroke="#ddd"><path d="M1 12A11 11 0 0 1 12 1M4 12.500A8.500 8.500 0 0 1 12.500 4M7 13A6 6 0 0 1 13 7" /><circle cx="11.500" cy="11.500" r="1.200" fill="#fff" /></svg></button>
        <button className="w-8 text-[11px]">ESP</button>
        <div className="flex w-[76px] flex-col items-center justify-center text-[11px] leading-[18px]"><span>19:58</span><span>28/07/2017</span></div>
        <button aria-label="Centro de actividades" className="flex w-[34px] items-center justify-center"><svg viewBox="0 0 18 16" className="h-4 w-[18px]"><path d="M1 0h15v12H9l-4 4v-4H1z" fill="#fff" /><path d="M3 3.500h11M3 6.500h11M3 9.500h7" stroke="#4a380a" strokeWidth="1.200" /><circle cx="13.500" cy="12" r="3" fill="#4a380a" stroke="#fff" /></svg></button>
        <span className="ml-[11px] w-[5px] border-l border-[#8c7b4c]" />
      </div>
    </footer>
  );
}

export default function App() {
  return (
    <div className={`relative flex h-screen flex-col overflow-hidden ${UI}`}>
      <TabBar />
      <NavBar />
      <Bookmarks />
      <Page />
      <CortanaPanel />
      <Taskbar />
    </div>
  );
}
